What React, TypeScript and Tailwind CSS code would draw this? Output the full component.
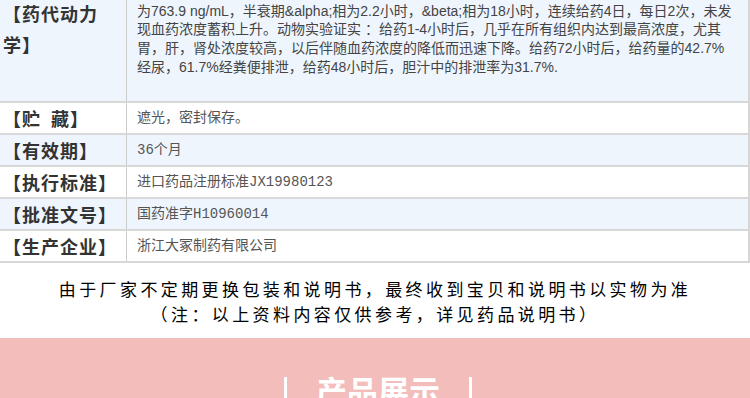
const rows = [
  { label: '【贮\u2002藏】', value: '遮光，密封保存。', blue: false },
  { label: '【有效期】', value: '36个月', blue: true },
  { label: '【执行标准】', value: '进口药品注册标准JX19980123', blue: false },
  { label: '【批准文号】', value: '国药准字H10960014', blue: true },
  { label: '【生产企业】', value: '浙江大冢制药有限公司', blue: false },
]

const pkLines = [
  '健康志愿者单次口服本品100mg后，平均达峰时间为2.4小时，平均血药峰浓度Cmax约',
  '为763.9 ng/mL，半衰期&alpha;相为2.2小时，&beta;相为18小时，连续给药4日，每日2次，未发',
  '现血药浓度蓄积上升。动物实验证实 ：给药1-4小时后，几乎在所有组织内达到最高浓度，尤其',
  '胃，肝，肾处浓度较高，以后伴随血药浓度的降低而迅速下降。给药72小时后，给药量的42.7%',
  '经尿，61.7%经粪便排泄，给药48小时后，胆汁中的排泄率为31.7%.',
]

export default function App() {
  return (
    <div className="w-[750px] h-[398px] overflow-hidden bg-white flex flex-col font-['Noto_Sans_CJK_SC',sans-serif]">
      {/* 说明书表格 */}
      <div className="-mt-[20px] border-r-2 border-[#d6d6d6]">
        <div className="flex h-[123px] bg-[#eef5fd] border-b-2 border-[#d8d8d8]">
          <div className="w-[127px] shrink-0 border-r border-[#cccccc] pl-[3px] pt-[18px] text-[18px] leading-[31px] tracking-[1px] font-bold text-[#333]">
            【药代动力学】
          </div>
          <div className="flex-1 pl-[10px] pt-[3px] text-[14px] leading-[18.7px] text-[#444] font-['Liberation_Sans','Noto_Sans_CJK_SC',sans-serif]">
            {pkLines.map((line, i) => (
              <div key={i} className="whitespace-nowrap">{line}</div>
            ))}
          </div>
        </div>

        {rows.map(row => (
          <div
            key={row.label}
            className={
              row.blue
                ? 'flex h-[32px] bg-[#eef5fd] border-b-2 border-[#d8d8d8]'
                : 'flex h-[32px] bg-white border-b-2 border-[#d8d8d8]'
            }
          >
            <div className="w-[127px] shrink-0 flex items-center border-r border-[#cccccc] pl-[3px] text-[18px] tracking-[1px] font-bold text-[#333] whitespace-nowrap">
              {row.label}
            </div>
            <div className="flex-1 flex items-center pl-[10px] text-[14px] text-[#555] font-['Liberation_Mono','Noto_Sans_CJK_SC',monospace]">
              {row.value}
            </div>
          </div>
        ))}
      </div>

      {/* 提示 */}
      <div className="pt-[13px] pb-[12px] text-center text-[17px] leading-[25px] tracking-[3.4px] text-black">
        <div>由于厂家不定期更换包装和说明书，最终收到宝贝和说明书以实物为准</div>
        <div>（注：以上资料内容仅供参考，详见药品说明书）</div>
      </div>

      {/* 产品展示 */}
      <div className="flex-1 bg-[#f2bdbb] pt-[36px] pl-[6px] flex justify-center items-start gap-[29px]">
        <div className="w-[3px] h-[30px] mt-[3px] bg-white" />
        <div className="text-[31px] leading-[32px] font-bold text-white">产品展示</div>
        <div className="w-[3px] h-[30px] mt-[3px] bg-white" />
      </div>
    </div>
  )
}
